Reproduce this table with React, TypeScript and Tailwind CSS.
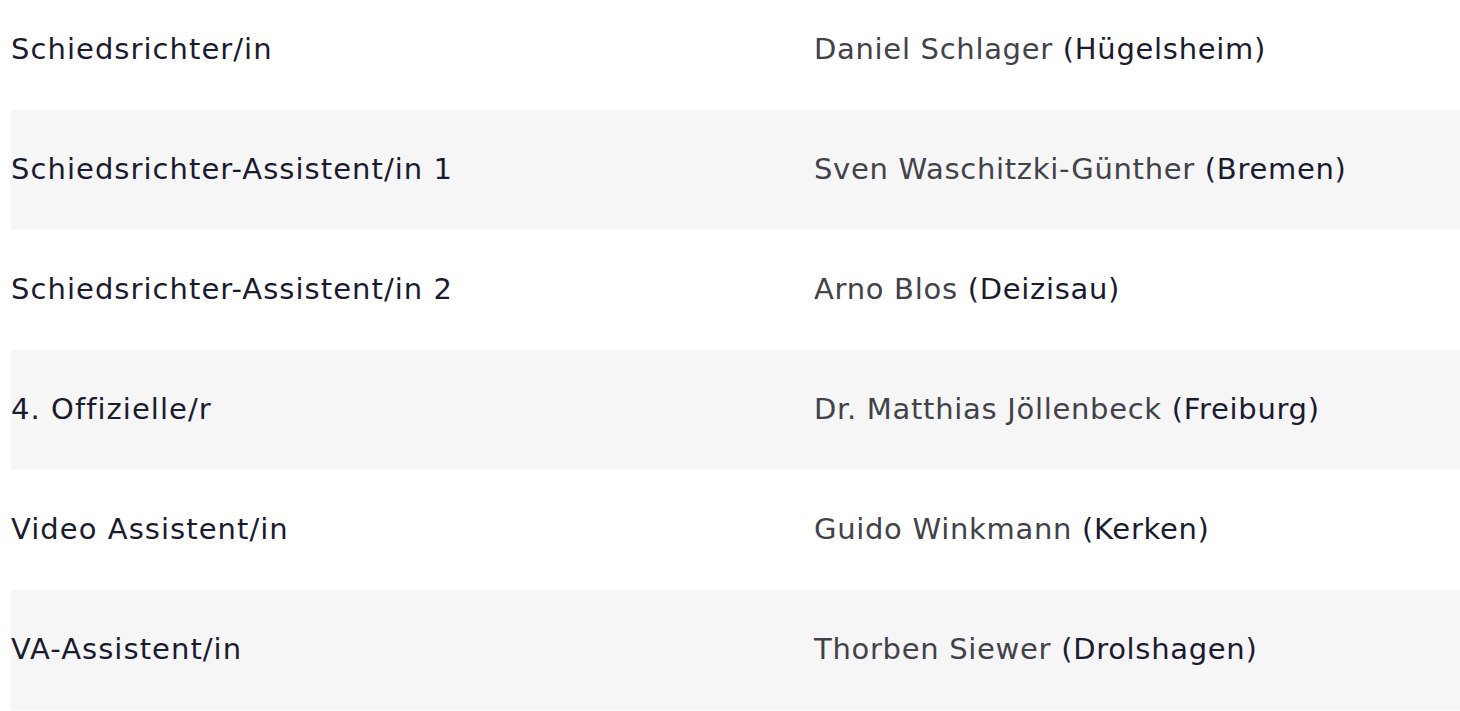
import React from "react";

const rows = [
  ["Schiedsrichter/in", "Daniel Schlager", "Hügelsheim"],
  ["Schiedsrichter-Assistent/in 1", "Sven Waschitzki-Günther", "Bremen"],
  ["Schiedsrichter-Assistent/in 2", "Arno Blos", "Deizisau"],
  ["4. Offizielle/r", "Dr. Matthias Jöllenbeck", "Freiburg"],
  ["Video Assistent/in", "Guido Winkmann", "Kerken"],
  ["VA-Assistent/in", "Thorben Siewer", "Drolshagen"],
];

export default function App() {
  return (
    <div className="w-[1460px] h-[711px] overflow-hidden bg-white font-['DejaVu_Sans',sans-serif]">
      <div className="-mt-[10px] pl-[11px]">
        {rows.map((r, i) => (
          <div
            key={i}
            className={`grid grid-cols-[803px_1fr] items-center h-[120px] pb-[1px] text-[29px] ${i % 2 === 1 ? "bg-[#f6f6f6]" : ""}`}
          >
            <div className="text-[#1b1b2f] whitespace-nowrap tracking-[1.05px]">{r[0]}</div>
            <div className="whitespace-nowrap tracking-[0.7px]">
              <span className="text-[#42424a]">{r[1]}</span>{" "}
              <span className="text-[#1b1b2f]">({r[2]})</span>
            </div>
          </div>
        ))}
      </div>
    </div>
  );
}
